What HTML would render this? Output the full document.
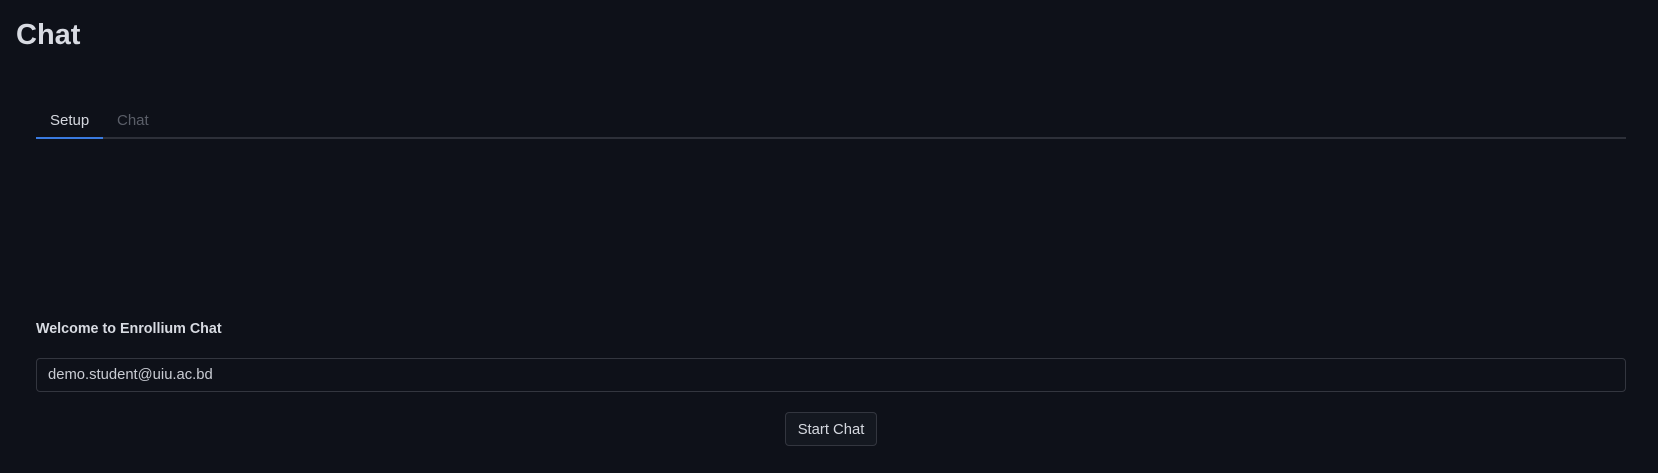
<!DOCTYPE html>
<html><head><style>
*{margin:0;padding:0;box-sizing:border-box}
body{width:1658px;height:473px;background:#0e1119;font-family:"Liberation Sans",sans-serif;color:#d5d8df;position:relative;overflow:hidden}
.a{position:absolute;white-space:nowrap}
</style></head><body>
<div class="a" style="left:16px;top:19px;font-size:29px;font-weight:bold;color:#d8dbe2">Chat</div>
<div class="a" style="left:50px;top:112px;font-size:15px;color:#d5d8df">Setup</div>
<div class="a" style="left:117px;top:112px;font-size:15px;color:#5a5e68">Chat</div>
<div class="a" style="left:36px;top:137px;width:1590px;height:2px;background:#2d3039"></div>
<div class="a" style="left:36px;top:137px;width:67px;height:2px;background:#3a7be0"></div>
<div class="a" style="left:36px;top:321px;font-size:14.3px;font-weight:bold;color:#d8dbe2">Welcome to Enrollium Chat</div>
<div class="a" style="left:36px;top:358px;width:1590px;height:34px;border:1px solid #33363f;border-radius:4px"></div>
<div class="a" style="left:48px;top:367px;font-size:14.8px;color:#c9ccd3">demo.student@uiu.ac.bd</div>
<div class="a" style="left:785px;top:412px;width:92px;height:34px;border:1px solid #33363f;border-radius:4px;background:#141820;font-size:14.8px;line-height:34px;text-align:center;color:#d5d8df">Start Chat</div>
</body></html>
